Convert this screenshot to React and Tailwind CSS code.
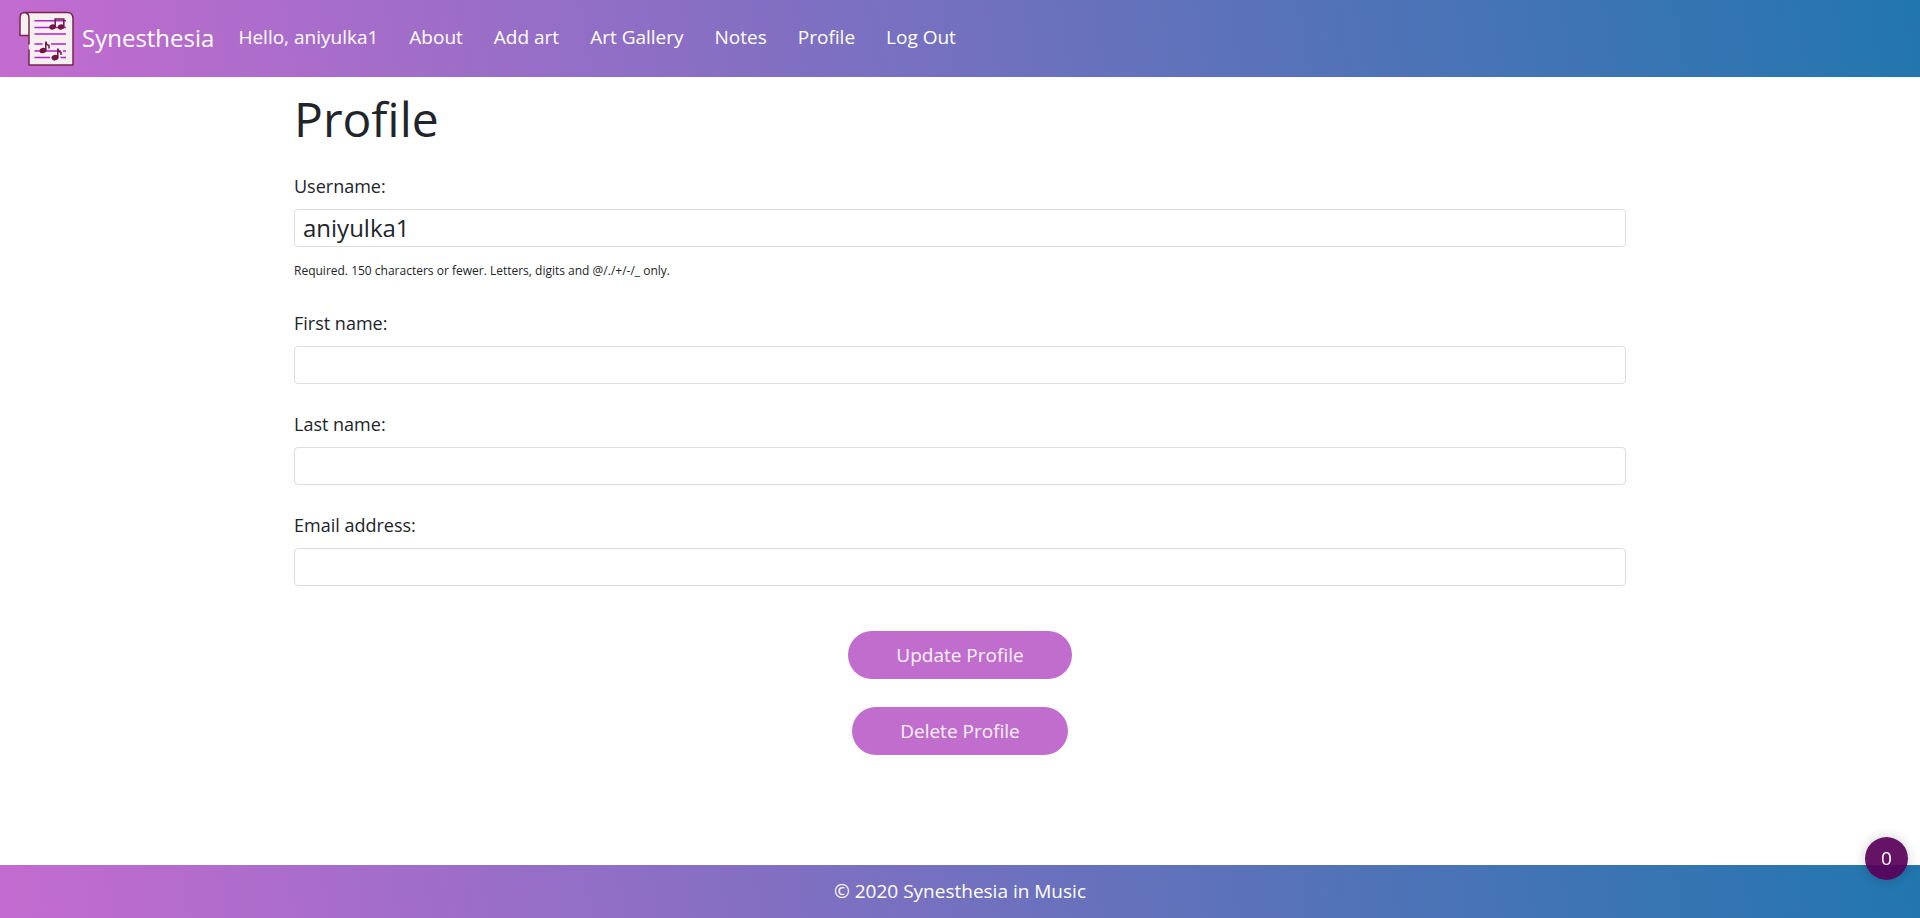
import React from "react";

const links = ["Hello, aniyulka1", "About", "Add art", "Art Gallery", "Notes", "Profile", "Log Out"];

const fields = [
  {
    id: "username",
    label: "Username:",
    value: "aniyulka1",
    help: "Required. 150 characters or fewer. Letters, digits and @/./+/-/_ only.",
  },
  { id: "first_name", label: "First name:", value: "" },
  { id: "last_name", label: "Last name:", value: "" },
  { id: "email", label: "Email address:", value: "", type: "email" },
];

function Logo() {
  return (
    <svg className="size-14" viewBox="0 0 56 56" fill="none" aria-hidden="true">
      <path d="M6.500 2.500H49Q55 2.500 55 8.500V55H11V25.500H2V8Q2 2.500 6.500 2.500Z" fill="#f5efee" />
      <g stroke="#b41fd0" strokeWidth="1.500">
        <path d="M16.500 10.700H48M16.500 17.500H48M16.500 24H48" />
        <path d="M16.500 34H24.500M33 34H48M16.500 41H22M28 41H43M45 41H48M16.500 47.500H32M42.500 47.500H48" />
      </g>
      <path
        d="M11 25.500H2V8Q2 2.500 6.500 2.500H49Q55 2.500 55 8.500V55H11V39.500M11 34.500V8Q11 3 6.500 2.500"
        stroke="#782455"
        strokeWidth="1.500"
        strokeLinejoin="round"
      />
      <g fill="#6d1742">
        <ellipse cx="34.500" cy="17" rx="3.300" ry="2.500" transform="rotate(-15 34.500 17)" />
        <ellipse cx="43" cy="17" rx="3.300" ry="2.500" transform="rotate(-15 43 17)" />
        <ellipse cx="25" cy="40.500" rx="3.500" ry="2.700" transform="rotate(-15 25 40.500)" />
        <ellipse cx="37" cy="47.700" rx="3.500" ry="2.700" transform="rotate(-15 37 47.700)" />
      </g>
      <path
        d="M37.200 17V9H45.800V17M27.800 40.500V31.500Q28 34.500 31 35.500V38.500M39.800 47.500V38.500Q40 41.500 43 42.500V45"
        stroke="#6d1742"
        strokeWidth="1.500"
      />
    </svg>
  );
}

function Field({ id, label, value, help, type = "text" }) {
  return (
    <div className="flex flex-col">
      <label htmlFor={id} className="mb-[9px] text-lg leading-7">
        {label}
      </label>
      <input
        id={id}
        name={id}
        type={type}
        defaultValue={value}
        className="h-[38px] w-full rounded-sm border border-[#dedede] bg-white px-2 pb-0.5 text-2xl outline-none"
      />
      {help && <small className="mt-3.5 mb-0.5 text-xs leading-5">{help}</small>}
    </div>
  );
}

export default function App() {
  return (
    <div className="flex min-h-screen flex-col bg-white font-['Open_Sans',sans-serif] text-[#212529]">
      <header className="bg-linear-80/srgb from-[#c46bd0] to-[#2176ae] px-[18px] text-white">
        <nav className="flex h-[77px] items-center gap-px pb-0.5">
          <a href="#home" className="mr-2 flex items-center gap-2 text-2xl">
            <Logo />
            Synesthesia
          </a>
          {links.map((link) => (
            <a key={link} href="#nav" className="px-[15px] text-[19px]">
              {link}
            </a>
          ))}
        </nav>
      </header>

      <main className="mx-auto w-full max-w-[1332px] grow">
        <h1 className="mt-3.5 mb-[25px] text-5xl leading-14">Profile</h1>
        <form className="flex flex-col gap-[26px]">
          {fields.map((field) => (
            <Field key={field.id} {...field} />
          ))}
          <div className="mt-[19px] flex flex-col items-center gap-7 text-[19px] text-[#fbf3fc]">
            <button type="submit" className="h-12 rounded-full bg-[#c06dce] px-12">
              Update Profile
            </button>
            <button type="button" className="h-12 rounded-full bg-[#c06dce] px-12">
              Delete Profile
            </button>
          </div>
        </form>
      </main>

      <footer className="flex h-[53px] items-center justify-center bg-linear-80/srgb from-[#c46bd0] to-[#2176ae] text-[19px] text-white">
        © 2020 Synesthesia in Music
      </footer>

      <button
        type="button"
        aria-label="Items: 0"
        className="fixed right-3 bottom-[38px] size-[43px] rounded-full bg-[#580058]/92 text-[19px] text-white shadow-[0_0_12px_rgba(0,0,0,0.2)]"
      >
        0
      </button>
    </div>
  );
}
